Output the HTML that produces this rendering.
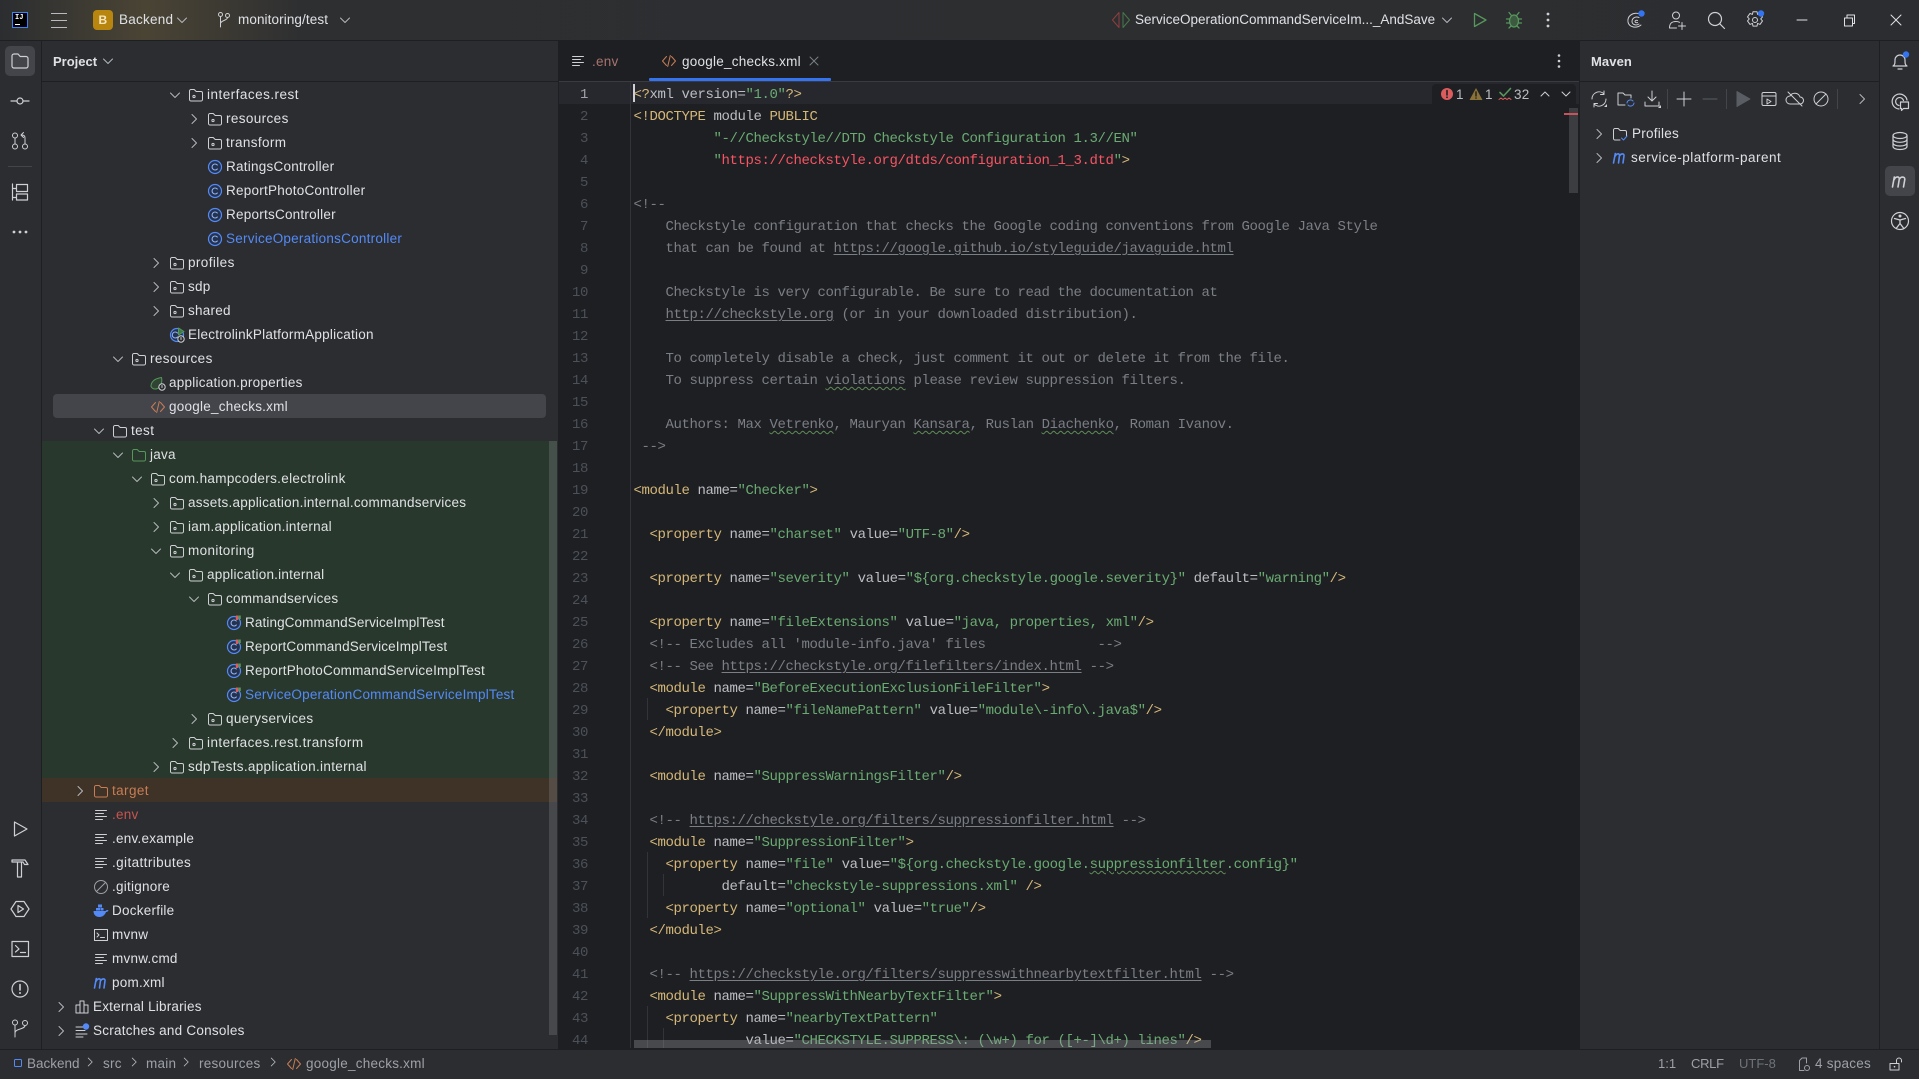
<!DOCTYPE html>
<html lang="en"><head><meta charset="utf-8"><title>IDE</title>
<style>
*{box-sizing:border-box}
html,body{margin:0;padding:0;width:1919px;height:1079px;overflow:hidden;background:#2b2d30}
body{font:13.5px/24px "Liberation Sans",sans-serif;letter-spacing:.24px;color:#dfe1e5;position:relative}
.a{position:absolute}
.r{position:absolute;left:0;width:557px;height:24px;line-height:24px;white-space:nowrap;margin-top:1px}
.r svg{position:absolute;width:16px;height:16px;top:4px}
.r span{position:absolute;top:0}
svg{overflow:visible;fill:none;stroke:#ced0d6;stroke-width:1;stroke-linecap:round;stroke-linejoin:round}
.s{position:absolute;width:20px;height:20px}
.t{position:absolute;white-space:nowrap}
pre{margin:0;position:absolute;font:14px/22px "Liberation Mono",monospace;letter-spacing:-.401px;color:#bcbec4}
.g{color:#d5b778}.v{color:#6aab73}.c{color:#7a7e85}.e{color:#f75464}
.u{text-decoration:underline;text-underline-offset:2px}
.w{text-decoration:underline wavy #5f8c58 1px;text-underline-offset:2px}
</style></head><body>
<svg width="0" height="0" style="position:absolute">
<defs>
<symbol id="cr" viewBox="0 0 16 16"><path d="M6 3.5l4.5 4.5L6 12.5" stroke="#b4b8bf"/></symbol>
<symbol id="cd" viewBox="0 0 16 16"><path d="M3.5 6l4.5 4.5L12.500 6" stroke="#b4b8bf"/></symbol>
<symbol id="f" viewBox="0 0 16 16"><path d="M1.500 4A1.500 1.500 0 0 1 3 2.500h3.200l2 2H13A1.500 1.500 0 0 1 14.500 6v6.500A1.500 1.500 0 0 1 13 14H3a1.500 1.500 0 0 1-1.500-1.500z"/></symbol>
<symbol id="p" viewBox="0 0 16 16"><path d="M1.500 4A1.500 1.500 0 0 1 3 2.500h3.200l2 2H13A1.500 1.500 0 0 1 14.500 6v6.500A1.500 1.500 0 0 1 13 14H3a1.500 1.500 0 0 1-1.500-1.500z"/><circle cx="6" cy="9.500" r="1.100"/></symbol>
<symbol id="fg" viewBox="0 0 16 16"><path d="M1.500 4A1.500 1.500 0 0 1 3 2.500h3.200l2 2H13A1.500 1.500 0 0 1 14.500 6v6.500A1.500 1.500 0 0 1 13 14H3a1.500 1.500 0 0 1-1.500-1.500z" stroke="#57965c"/></symbol>
<symbol id="fo" viewBox="0 0 16 16"><path d="M1.500 4A1.500 1.500 0 0 1 3 2.500h3.200l2 2H13A1.500 1.500 0 0 1 14.500 6v6.500A1.500 1.500 0 0 1 13 14H3a1.500 1.500 0 0 1-1.500-1.500z" stroke="#c77d55"/></symbol>
<symbol id="k" viewBox="0 0 16 16"><circle cx="8" cy="8" r="6.500" stroke="#548af7" stroke-width="1.200" fill="#25324d"/><path d="M10.300 6a3 3 0 1 0 0 4" stroke="#8fb3f7" stroke-width="1.100"/></symbol>
<symbol id="kt" viewBox="0 0 16 16"><circle cx="8" cy="8" r="6.500" stroke="#548af7" stroke-width="1.200" fill="#25324d"/><path d="M10.300 6a3 3 0 1 0 0 4" stroke="#8fb3f7" stroke-width="1.100"/><path d="M9.800 .5h2.400v4.500H9.800z" fill="#db5c5c" stroke="none"/><path d="M12.200 .5h2.600v3.500h-2.600z" fill="#57965c" stroke="none"/></symbol>
<symbol id="kr" viewBox="0 0 16 16"><circle cx="8" cy="8" r="6.500" stroke="#548af7" stroke-width="1.200" fill="#25324d"/><path d="M8.500 6a3 3 0 1 0 0 4" stroke="#8fb3f7" stroke-width="1.100"/><path d="M9.500 1l5.500 3.500L9.500 8z" fill="#3d7a48" stroke="#57965c"/><circle cx="12" cy="12" r="3.200" fill="#2b2d30" stroke="#ced0d6"/><path d="M12 10.500v2" stroke="#ced0d6"/></symbol>
<symbol id="x" viewBox="0 0 16 16"><path d="M5.500 3.500L1.500 8l4 4.500M10.500 3.500l4 4.500-4 4.500" stroke="#c77d55"/><path d="M9.300 2.500L6.700 13.500" stroke="#c77d55"/></symbol>
<symbol id="l" viewBox="0 0 16 16"><path d="M2.500 3.500h11M2.500 6.500h8M2.500 9.500h11M2.500 12.500h7" stroke="#ced0d6"/></symbol>
<symbol id="m" viewBox="0 0 16 16"><path d="M1.500 13l1.800-9.500M3.300 6c1-2.500 4.200-3 4.200-.5L6.500 13M7.500 6c1-2.500 4.700-3 4.500-.3L11 13" stroke="#548af7" stroke-width="1.600"/></symbol>
</defs></svg>

<!-- title bar -->
<div class="a" style="left:0;top:0;width:1919px;height:40px;background:linear-gradient(90deg,#2b2d30 0,#4a4434 145px,#2e2f31 300px,#2b2d30 100%)"></div>
<div class="a" style="left:0;top:40px;width:1919px;height:1px;background:#1e1f22"></div>
<div class="a" style="left:12px;top:12px;width:16px;height:16px;background:#000;border:1.500px solid #3b82f6"></div>
<div class="t" style="left:15px;top:10.500px;font:bold 7px/14px 'Liberation Mono',monospace;letter-spacing:0;color:#fff">IJ</div>
<div class="a" style="left:15px;top:24px;width:5px;height:1px;background:#fff"></div>
<div class="a" style="left:51px;top:12.500px;width:16px;height:1.500px;background:#b8babf"></div>
<div class="a" style="left:51px;top:19.500px;width:16px;height:1.500px;background:#b8babf"></div>
<div class="a" style="left:51px;top:26.500px;width:16px;height:1.500px;background:#b8babf"></div>
<div class="a" style="left:93px;top:10px;width:20px;height:20px;border-radius:4px;background:#b8860f;color:#f5e6c0;font:bold 12px/20px 'Liberation Sans',sans-serif;text-align:center">B</div>
<div class="t" style="left:119px;top:8px;font-size:13.500px">Backend</div>
<svg class="a" style="left:174px;top:12px;width:16px;height:16px" viewBox="0 0 16 16"><use href="#cd"/></svg>
<svg class="s" style="left:214px;top:10px" viewBox="0 0 20 20"><circle cx="6.500" cy="4.500" r="2"/><circle cx="13.500" cy="5.500" r="2"/><path d="M6.500 6.500V17M13.500 7.500c0 3-7 3-7 6"/></svg>
<div class="t" style="left:238px;top:8px;letter-spacing:.1px">monitoring/test</div>
<svg class="a" style="left:337px;top:12px;width:16px;height:16px" viewBox="0 0 16 16"><use href="#cd"/></svg>

<svg class="s" style="left:1111px;top:10px" viewBox="0 0 20 20"><path d="M8 2.500L1.500 10 8 17.500z" stroke="#8c3f3f"/><path d="M12 2.500L18.500 10 12 17.500z" stroke="#47764c"/></svg>
<div class="t" style="left:1135px;top:8px;letter-spacing:0">ServiceOperationCommandServiceIm..._AndSave</div>
<svg class="a" style="left:1439px;top:12px;width:16px;height:16px" viewBox="0 0 16 16"><use href="#cd"/></svg>
<svg class="s" style="left:1470px;top:10px" viewBox="0 0 20 20"><path d="M4.500 3.500L16 10 4.500 16.500z" stroke="#57965c" stroke-width="1.300"/></svg>
<svg class="s" style="left:1504px;top:10px" viewBox="0 0 20 20"><g stroke="#57965c" stroke-width="1.300"><ellipse cx="10" cy="11" rx="4.500" ry="6" fill="#3c5a40"/><path d="M7 5l-2-2.500M13 5l2-2.500M5.500 9H2.500M14.500 9h3M5.500 13H2.500M14.500 13h3M7 16l-2 2M13 16l2 2"/></g></svg>
<svg class="s" style="left:1538px;top:10px" viewBox="0 0 20 20"><g fill="#ced0d6" stroke="none"><circle cx="10" cy="4" r="1.400"/><circle cx="10" cy="10" r="1.400"/><circle cx="10" cy="16" r="1.400"/></g></svg>
<svg class="s" style="left:1625px;top:10px" viewBox="0 0 20 20"><path d="M15 4C8 1.500 2 6 3 12c1 5 8 7 13 3M14 7.500c-4-1.500-7 1-7 4 0 3 4 4.500 7 2.500M12.500 10.500c-1.500-.5-2.500 0-2.500 1 0 1 1.500 1.500 2.500 1"/><circle cx="16.500" cy="3.500" r="3.200" fill="#3574f0" stroke="none"/></svg>
<svg class="s" style="left:1667px;top:10px" viewBox="0 0 20 20"><circle cx="9" cy="5.500" r="3.500"/><path d="M2.500 18c0-5 2.500-6.500 6.500-6.500 1.500 0 2.500.2 3.500.8M2.500 18h7M15 12.500v7M11.500 16h7"/></svg>
<svg class="s" style="left:1706px;top:10px" viewBox="0 0 20 20"><circle cx="9" cy="9" r="6.500" stroke-width="1.200"/><path d="M13.700 13.700l4.800 4.800" stroke-width="1.200"/></svg>
<svg class="s" style="left:1745px;top:10px" viewBox="0 0 20 20"><circle cx="10" cy="10" r="2.500"/><path d="M8 1.800h4l.6 2.600 2.400-1 2.500 3.500-1.800 2 1.800 2-2.500 3.500-2.400-1-.6 2.700H8l-.6-2.700-2.400 1-2.500-3.500 1.800-2-1.800-2L5 3.400l2.400 1z"/><circle cx="16" cy="3.500" r="3.200" fill="#3574f0" stroke="none"/></svg>
<svg class="s" style="left:1792px;top:10px" viewBox="0 0 20 20"><path d="M5 10h10" stroke="#dfe1e5"/></svg>
<svg class="s" style="left:1839px;top:10px" viewBox="0 0 20 20"><path d="M5.500 8h8v8h-8zM8 8V5h7.500v8.500h-2" stroke="#dfe1e5"/></svg>
<svg class="s" style="left:1886px;top:10px" viewBox="0 0 20 20"><path d="M5 5l10 10M15 5L5 15" stroke="#dfe1e5"/></svg>

<!-- left stripe -->
<div class="a" style="left:41px;top:41px;width:1px;height:1008px;background:#1e1f22"></div>
<div class="a" style="left:5px;top:46px;width:30px;height:30px;border-radius:5px;background:#43454a"></div>
<svg class="s" style="left:10px;top:51px" viewBox="0 0 20 20"><path d="M2 5A2 2 0 0 1 4 3h4l2.200 2.500H16a2 2 0 0 1 2 2V15a2 2 0 0 1-2 2H4a2 2 0 0 1-2-2z" stroke-width="1.200"/></svg>
<svg class="s" style="left:10px;top:91px" viewBox="0 0 20 20"><circle cx="10" cy="10" r="3" stroke-width="1.200"/><path d="M1 10h6M13 10h6" stroke-width="1.200"/></svg>
<svg class="s" style="left:10px;top:131px" viewBox="0 0 20 20"><circle cx="5" cy="4.500" r="2.500"/><circle cx="5" cy="15.500" r="2.500"/><circle cx="15" cy="15.500" r="2.500"/><path d="M5 7v6M15 13V7c0-2-1-3-3-3M13.500 1.500L11 4l2.500 2.500"/></svg>
<div class="a" style="left:8px;top:166px;width:24px;height:1px;background:#43454a"></div>
<svg class="s" style="left:10px;top:182px" viewBox="0 0 20 20"><path d="M2.500 2v16M2.500 6.500H6M2.500 15.500H6M6.500 2.500h11v7h-11zM6.500 12h11v6h-11z" stroke-width="1.200"/></svg>
<svg class="s" style="left:10px;top:222px" viewBox="0 0 20 20"><g fill="#ced0d6" stroke="none"><circle cx="4" cy="10" r="1.400"/><circle cx="10" cy="10" r="1.400"/><circle cx="16" cy="10" r="1.400"/></g></svg>
<svg class="s" style="left:10px;top:819px" viewBox="0 0 20 20"><path d="M4.500 3L17 10 4.500 17z" stroke-width="1.200"/></svg>
<svg class="s" style="left:10px;top:858px" viewBox="0 0 20 20"><path d="M2 2h13l3 4.500h-3.500L13 4H2zM7.500 4.500V19h4V4.500" stroke-width="1.200"/></svg>
<svg class="s" style="left:10px;top:899px" viewBox="0 0 20 20"><path d="M6 2.500h8l5 7.500-5 7.500H6L1 10z" stroke-width="1.200"/><path d="M8 6.500l5.500 3.500L8 13.500z" stroke-width="1.200"/></svg>
<svg class="s" style="left:10px;top:939px" viewBox="0 0 20 20"><path d="M2 2.500h16.500v15H2zM5.500 6.500l3.500 3.500-3.500 3M10.500 13.500h5" stroke-width="1.200"/></svg>
<svg class="s" style="left:10px;top:979px" viewBox="0 0 20 20"><circle cx="10" cy="10" r="8" stroke-width="1.200"/><path d="M10 5.500v5.500" stroke-width="1.600"/><circle cx="10" cy="14" r="1" fill="#ced0d6" stroke="none"/></svg>
<svg class="s" style="left:10px;top:1018px" viewBox="0 0 20 20"><circle cx="5" cy="4.500" r="2.500"/><circle cx="15" cy="5" r="2.500"/><path d="M5 7v12M15 7.500c0 4-10 3-10 7.500"/></svg>

<!-- project header -->
<div class="t" style="left:53px;top:50px;font-weight:bold;letter-spacing:0;font-size:13px">Project</div>
<svg class="a" style="left:100px;top:53px;width:16px;height:16px" viewBox="0 0 16 16"><use href="#cd"/></svg>
<div class="a" style="left:42px;top:81px;width:517px;height:1px;background:#1e1f22"></div>

<!-- row backgrounds -->
<div class="a" style="left:42px;top:441px;width:515px;height:337px;background:#29382c"></div>
<div class="a" style="left:42px;top:778px;width:515px;height:24px;background:#3f3226"></div>
<div class="a" style="left:53px;top:394px;width:493px;height:24px;border-radius:4px;background:#43454a"></div>

<!-- tree -->
<div class="r" style="top:82px"><svg style="left:167px"><use href="#cd"/></svg><svg style="left:188px"><use href="#p"/></svg><span style="left:207px;letter-spacing:.48px">interfaces.rest</span></div>
<div class="r" style="top:106px"><svg style="left:186px"><use href="#cr"/></svg><svg style="left:207px"><use href="#p"/></svg><span style="left:226px;letter-spacing:.38px">resources</span></div>
<div class="r" style="top:130px"><svg style="left:186px"><use href="#cr"/></svg><svg style="left:207px"><use href="#p"/></svg><span style="left:226px;letter-spacing:.38px">transform</span></div>
<div class="r" style="top:154px"><svg style="left:207px"><use href="#k"/></svg><span style="left:226px">RatingsController</span></div>
<div class="r" style="top:178px"><svg style="left:207px"><use href="#k"/></svg><span style="left:226px">ReportPhotoController</span></div>
<div class="r" style="top:202px"><svg style="left:207px"><use href="#k"/></svg><span style="left:226px">ReportsController</span></div>
<div class="r" style="top:226px"><svg style="left:207px"><use href="#k"/></svg><span style="left:226px;color:#548af7">ServiceOperationsController</span></div>
<div class="r" style="top:250px"><svg style="left:148px"><use href="#cr"/></svg><svg style="left:169px"><use href="#p"/></svg><span style="left:188px;letter-spacing:.4px">profiles</span></div>
<div class="r" style="top:274px"><svg style="left:148px"><use href="#cr"/></svg><svg style="left:169px"><use href="#p"/></svg><span style="left:188px">sdp</span></div>
<div class="r" style="top:298px"><svg style="left:148px"><use href="#cr"/></svg><svg style="left:169px"><use href="#p"/></svg><span style="left:188px">shared</span></div>
<div class="r" style="top:322px"><svg style="left:169px"><use href="#kr"/></svg><span style="left:188px">ElectrolinkPlatformApplication</span></div>
<div class="r" style="top:346px"><svg style="left:110px"><use href="#cd"/></svg><svg style="left:131px"><use href="#p"/></svg><span style="left:150px;letter-spacing:.38px">resources</span></div>
<div class="r" style="top:370px"><svg style="left:150px" viewBox="0 0 16 16"><path d="M1 11.500C1 6.500 5 3.500 11.500 2.500c1 4-.5 9-4 11-2.500 1-5 .5-6.500-2z" stroke="#57965c" fill="#2f4433"/><circle cx="12" cy="12" r="3.200" fill="#2b2d30" stroke="#ced0d6"/><path d="M12 10.500v2" stroke="#ced0d6"/></svg><span style="left:169px">application.properties</span></div>
<div class="r" style="top:394px"><svg style="left:150px"><use href="#x"/></svg><span style="left:169px">google_checks.xml</span></div>
<div class="r" style="top:418px"><svg style="left:91px"><use href="#cd"/></svg><svg style="left:112px"><use href="#f"/></svg><span style="left:131px;letter-spacing:.4px">test</span></div>
<div class="r" style="top:442px"><svg style="left:110px"><use href="#cd"/></svg><svg style="left:131px"><use href="#fg"/></svg><span style="left:150px">java</span></div>
<div class="r" style="top:466px"><svg style="left:129px"><use href="#cd"/></svg><svg style="left:150px"><use href="#p"/></svg><span style="left:169px;letter-spacing:.33px">com.hampcoders.electrolink</span></div>
<div class="r" style="top:490px"><svg style="left:148px"><use href="#cr"/></svg><svg style="left:169px"><use href="#p"/></svg><span style="left:188px">assets.application.internal.commandservices</span></div>
<div class="r" style="top:514px"><svg style="left:148px"><use href="#cr"/></svg><svg style="left:169px"><use href="#p"/></svg><span style="left:188px">iam.application.internal</span></div>
<div class="r" style="top:538px"><svg style="left:148px"><use href="#cd"/></svg><svg style="left:169px"><use href="#p"/></svg><span style="left:188px;letter-spacing:.36px">monitoring</span></div>
<div class="r" style="top:562px"><svg style="left:167px"><use href="#cd"/></svg><svg style="left:188px"><use href="#p"/></svg><span style="left:207px">application.internal</span></div>
<div class="r" style="top:586px"><svg style="left:186px"><use href="#cd"/></svg><svg style="left:207px"><use href="#p"/></svg><span style="left:226px">commandservices</span></div>
<div class="r" style="top:610px"><svg style="left:226px"><use href="#kt"/></svg><span style="left:245px;letter-spacing:.11px">RatingCommandServiceImplTest</span></div>
<div class="r" style="top:634px"><svg style="left:226px"><use href="#kt"/></svg><span style="left:245px;letter-spacing:.15px">ReportCommandServiceImplTest</span></div>
<div class="r" style="top:658px"><svg style="left:226px"><use href="#kt"/></svg><span style="left:245px;letter-spacing:.2px">ReportPhotoCommandServiceImplTest</span></div>
<div class="r" style="top:682px"><svg style="left:226px"><use href="#kt"/></svg><span style="left:245px;color:#548af7;letter-spacing:.2px">ServiceOperationCommandServiceImplTest</span></div>
<div class="r" style="top:706px"><svg style="left:186px"><use href="#cr"/></svg><svg style="left:207px"><use href="#p"/></svg><span style="left:226px;letter-spacing:.32px">queryservices</span></div>
<div class="r" style="top:730px"><svg style="left:167px"><use href="#cr"/></svg><svg style="left:188px"><use href="#p"/></svg><span style="left:207px;letter-spacing:.44px">interfaces.rest.transform</span></div>
<div class="r" style="top:754px"><svg style="left:148px"><use href="#cr"/></svg><svg style="left:169px"><use href="#p"/></svg><span style="left:188px;letter-spacing:.32px">sdpTests.application.internal</span></div>
<div class="r" style="top:778px"><svg style="left:72px"><use href="#cr"/></svg><svg style="left:93px"><use href="#fo"/></svg><span style="left:112px;color:#c77d55;letter-spacing:.4px">target</span></div>
<div class="r" style="top:802px"><svg style="left:93px"><use href="#l"/></svg><span style="left:112px;color:#c75450">.env</span></div>
<div class="r" style="top:826px"><svg style="left:93px"><use href="#l"/></svg><span style="left:112px">.env.example</span></div>
<div class="r" style="top:850px"><svg style="left:93px"><use href="#l"/></svg><span style="left:112px;letter-spacing:.4px">.gitattributes</span></div>
<div class="r" style="top:874px"><svg style="left:93px" viewBox="0 0 16 16"><circle cx="8" cy="8" r="6.500" stroke="#9da0a8"/><path d="M3.500 12.500l9-9" stroke="#9da0a8"/></svg><span style="left:112px">.gitignore</span></div>
<div class="r" style="top:898px"><svg style="left:93px" viewBox="0 0 16 16"><g fill="#548af7" stroke="none"><path d="M.5 8h12c.7-1 2-1.300 3-.8-.5 1.300-1.500 1.800-2.500 1.800-1 3-3.500 5-6.500 5-3.500 0-6-2-6-6z"/><rect x="5" y="1.500" width="4" height="3"/><rect x="3" y="5" width="4" height="2.500"/><rect x="7.500" y="5" width="3" height="2.500"/></g></svg><span style="left:112px">Dockerfile</span></div>
<div class="r" style="top:922px"><svg style="left:93px" viewBox="0 0 16 16"><path d="M1.500 2.500h13v11h-13zM4 6l2 2-2 2M7.500 10.500h4"/></svg><span style="left:112px">mvnw</span></div>
<div class="r" style="top:946px"><svg style="left:93px"><use href="#l"/></svg><span style="left:112px">mvnw.cmd</span></div>
<div class="r" style="top:970px"><svg style="left:93px"><use href="#m"/></svg><span style="left:112px">pom.xml</span></div>
<div class="r" style="top:994px"><svg style="left:53px"><use href="#cr"/></svg><svg style="left:74px" viewBox="0 0 16 16"><path d="M2 6h4v8H2zM6 2h4v12H6zM10 6h4v8h-4z"/></svg><span style="left:93px;letter-spacing:.2px">External Libraries</span></div>
<div class="r" style="top:1018px"><svg style="left:53px"><use href="#cr"/></svg><svg style="left:74px" viewBox="0 0 16 16"><path d="M2 4h8M2 7.500h9M2 11h11M2 14h7"/><circle cx="12" cy="3.500" r="3.200" fill="#548af7" stroke="none"/></svg><span style="left:93px">Scratches and Consoles</span></div>

<!-- tree scrollbar -->
<div class="a" style="left:549px;top:441px;width:8px;height:594px;background:rgba(140,145,150,.28)"></div>
<div class="a" style="left:558px;top:41px;width:1px;height:1008px;background:#1e1f22"></div>

<!-- editor -->
<div class="a" style="left:559px;top:41px;width:1020px;height:1008px;background:#1e1f22"></div>
<div class="a" style="left:559px;top:81px;width:1020px;height:1px;background:#393b40"></div>
<div class="a" style="left:649px;top:78px;width:182px;height:3px;background:#3574f0;border-radius:1px"></div>
<svg class="a" style="left:570px;top:53px;width:16px;height:16px" viewBox="0 0 16 16"><use href="#l"/></svg>
<div class="t" style="left:592px;top:50px;color:#a8736f">.env</div>
<svg class="a" style="left:661px;top:53px;width:16px;height:16px" viewBox="0 0 16 16"><use href="#x"/></svg>
<div class="t" style="left:682px;top:50px">google_checks.xml</div>
<svg class="a" style="left:808px;top:55px;width:12px;height:12px" viewBox="0 0 12 12"><path d="M2 2l8 8M10 2l-8 8" stroke="#7a7e85"/></svg>
<svg class="s" style="left:1549px;top:51px" viewBox="0 0 20 20"><g fill="#ced0d6" stroke="none"><circle cx="10" cy="4.500" r="1.300"/><circle cx="10" cy="10" r="1.300"/><circle cx="10" cy="15.500" r="1.300"/></g></svg>

<div class="a" style="left:559px;top:82px;width:1020px;height:22px;background:#26282e"></div>
<div class="a" style="left:630px;top:82px;width:1px;height:966px;background:#313438"></div>

<!-- indent guides -->
<div class="a" style="left:647px;top:698px;width:1px;height:22px;background:#313438"></div>
<div class="a" style="left:647px;top:852px;width:1px;height:66px;background:#313438"></div>
<div class="a" style="left:663px;top:874px;width:1px;height:22px;background:#313438"></div>
<div class="a" style="left:647px;top:1006px;width:1px;height:42px;background:#313438"></div>
<div class="a" style="left:663px;top:1028px;width:1px;height:20px;background:#313438"></div>

<pre style="left:548px;top:84px;width:40px;text-align:right;color:#4b5059"><span style="color:#a1a3ab">1</span>
2
3
4
5
6
7
8
9
10
11
12
13
14
15
16
17
18
19
20
21
22
23
24
25
26
27
28
29
30
31
32
33
34
35
36
37
38
39
40
41
42
43
44</pre>

<pre style="left:633.500px;top:84px;height:964px;overflow:hidden"><span class="g">&lt;?</span>xml version=<span class="v">"1.0"</span><span class="g">?&gt;</span>
<span class="g">&lt;!DOCTYPE</span> module <span class="g">PUBLIC</span>
          <span class="v">"-//Checkstyle//DTD Checkstyle Configuration 1.3//EN"</span>
          <span class="v">"</span><span class="e">https://checkstyle.org/dtds/configuration_1_3.dtd</span><span class="v">"</span><span class="g">&gt;</span>

<span class="c">&lt;!--
    Checkstyle configuration that checks the Google coding conventions from Google Java Style
    that can be found at <span class="u">https://google.github.io/styleguide/javaguide.html</span>

    Checkstyle is very configurable. Be sure to read the documentation at
    <span class="u">http://checkstyle.org</span> (or in your downloaded distribution).

    To completely disable a check, just comment it out or delete it from the file.
    To suppress certain <span class="w">violations</span> please review suppression filters.

    Authors: Max <span class="w">Vetrenko</span>, Mauryan <span class="w">Kansara</span>, Ruslan <span class="w">Diachenko</span>, Roman Ivanov.
 --&gt;</span>

<span class="g">&lt;module</span> name=<span class="v">"Checker"</span><span class="g">&gt;</span>

  <span class="g">&lt;property</span> name=<span class="v">"charset"</span> value=<span class="v">"UTF-8"</span><span class="g">/&gt;</span>

  <span class="g">&lt;property</span> name=<span class="v">"severity"</span> value=<span class="v">"${org.checkstyle.google.severity}"</span> default=<span class="v">"warning"</span><span class="g">/&gt;</span>

  <span class="g">&lt;property</span> name=<span class="v">"fileExtensions"</span> value=<span class="v">"java, properties, xml"</span><span class="g">/&gt;</span>
  <span class="c">&lt;!-- Excludes all 'module-info.java' files              --&gt;</span>
  <span class="c">&lt;!-- See <span class="u">https://checkstyle.org/filefilters/index.html</span> --&gt;</span>
  <span class="g">&lt;module</span> name=<span class="v">"BeforeExecutionExclusionFileFilter"</span><span class="g">&gt;</span>
    <span class="g">&lt;property</span> name=<span class="v">"fileNamePattern"</span> value=<span class="v">"module\-info\.java$"</span><span class="g">/&gt;</span>
  <span class="g">&lt;/module&gt;</span>

  <span class="g">&lt;module</span> name=<span class="v">"SuppressWarningsFilter"</span><span class="g">/&gt;</span>

  <span class="c">&lt;!-- <span class="u">https://checkstyle.org/filters/suppressionfilter.html</span> --&gt;</span>
  <span class="g">&lt;module</span> name=<span class="v">"SuppressionFilter"</span><span class="g">&gt;</span>
    <span class="g">&lt;property</span> name=<span class="v">"file"</span> value=<span class="v">"${org.checkstyle.google.<span class="w">suppressionfilter</span>.config}"</span>
           default=<span class="v">"checkstyle-suppressions.xml"</span> <span class="g">/&gt;</span>
    <span class="g">&lt;property</span> name=<span class="v">"optional"</span> value=<span class="v">"true"</span><span class="g">/&gt;</span>
  <span class="g">&lt;/module&gt;</span>

  <span class="c">&lt;!-- <span class="u">https://checkstyle.org/filters/suppresswithnearbytextfilter.html</span> --&gt;</span>
  <span class="g">&lt;module</span> name=<span class="v">"SuppressWithNearbyTextFilter"</span><span class="g">&gt;</span>
    <span class="g">&lt;property</span> name=<span class="v">"nearbyTextPattern"</span>
              value=<span class="v">"CHECKSTYLE.SUPPRESS\: (\w+) for ([+-]\d+) lines"</span><span class="g">/&gt;</span></pre>
<div class="a" style="left:633px;top:84px;width:2px;height:18px;background:#ced0d6"></div>

<!-- editor scrollbars -->
<div class="a" style="left:634px;top:1040px;width:577px;height:8px;background:rgba(160,162,168,.32)"></div>
<div class="a" style="left:1569px;top:108px;width:9px;height:85px;background:#3b3d40"></div>
<div class="a" style="left:1564px;top:113px;width:14px;height:2px;background:#c9535d"></div>

<!-- inspection widget -->
<div class="a" style="left:1432px;top:84px;width:144px;height:20px;background:#1e1f22;border-radius:4px 4px 0 0"></div>
<svg class="a" style="left:1440px;top:87px;width:14px;height:14px" viewBox="0 0 14 14"><circle cx="7" cy="7" r="6" fill="#db5c5c" stroke="none"/><path d="M7 3.500v4.500" stroke="#1e1f22" stroke-width="1.600"/><circle cx="7" cy="10.300" r=".9" fill="#1e1f22" stroke="none"/></svg>
<div class="t" style="left:1456px;top:83px;color:#bcbec4">1</div>
<svg class="a" style="left:1469px;top:87px;width:14px;height:14px" viewBox="0 0 14 14"><path d="M7 1L13.500 13H.5z" fill="#8a7238" stroke="none"/><path d="M7 5v4" stroke="#1e1f22" stroke-width="1.400"/><circle cx="7" cy="11" r=".8" fill="#1e1f22" stroke="none"/></svg>
<div class="t" style="left:1485px;top:83px;color:#bcbec4">1</div>
<svg class="a" style="left:1498px;top:87px;width:14px;height:14px" viewBox="0 0 14 14"><path d="M2 5.500L5.500 9 12.500 1.500" stroke="#57965c" stroke-width="1.600"/><path d="M1 12.500l2-1.500 2 1.500 2-1.500 2 1.500 2-1.500 2 1.500" stroke="#db5c5c"/></svg>
<div class="t" style="left:1514px;top:83px;color:#bcbec4">32</div>
<svg class="a" style="left:1539px;top:88px;width:12px;height:12px" viewBox="0 0 12 12"><path d="M2 8l4-4 4 4"/></svg>
<svg class="a" style="left:1560px;top:88px;width:12px;height:12px" viewBox="0 0 12 12"><path d="M2 4l4 4 4-4"/></svg>

<!-- Maven -->
<div class="a" style="left:1579px;top:41px;width:1px;height:1008px;background:#1e1f22"></div>
<div class="a" style="left:1580px;top:41px;width:299px;height:1008px;background:#2b2d30"></div>
<div class="a" style="left:1580px;top:81px;width:299px;height:1px;background:#1e1f22"></div>
<div class="t" style="left:1591px;top:50px;font-weight:bold;letter-spacing:.1px;font-size:13px">Maven</div>
<svg class="s" style="left:1589px;top:89px" viewBox="0 0 20 20"><path d="M3 10a7 7 0 0 1 12-5M17 10a7 7 0 0 1-12 5M15 2v3.500h-3.500M5 18v-3.500h3.500"/><path d="M18 18l-3 0 3-3z" fill="#ced0d6" stroke="none"/></svg>
<svg class="s" style="left:1616px;top:89px" viewBox="0 0 20 20"><path d="M2 4h5l2 2h6v3M2 4v12h7"/><path d="M11 14a3.500 3.500 0 0 1 6-2M18 14a3.500 3.500 0 0 1-6 2" stroke="#548af7"/></svg>
<svg class="s" style="left:1642px;top:89px" viewBox="0 0 20 20"><path d="M10 2v10M6 8l4 4 4-4M3 13v4h14v-4"/><path d="M19 19h-3l3-3z" fill="#ced0d6" stroke="none"/></svg>
<div class="a" style="left:1667px;top:89px;width:1px;height:20px;background:#43454a"></div>
<svg class="s" style="left:1674px;top:89px" viewBox="0 0 20 20"><path d="M10 3v14M3 10h14"/></svg>
<svg class="s" style="left:1700px;top:89px" viewBox="0 0 20 20"><path d="M3 10h14" stroke="#5a5d63"/></svg>
<div class="a" style="left:1726px;top:89px;width:1px;height:20px;background:#43454a"></div>
<svg class="s" style="left:1733px;top:89px" viewBox="0 0 20 20"><path d="M4 2.500L17 10 4 17.500z" fill="#5a5d63" stroke="#5a5d63"/></svg>
<svg class="s" style="left:1759px;top:89px" viewBox="0 0 20 20"><rect x="3" y="3.500" width="14" height="13" rx="1.500"/><path d="M3 7h14M8 10l4 2.500L8 15z"/></svg>
<svg class="s" style="left:1785px;top:89px" viewBox="0 0 20 20"><path d="M5 15a4 4 0 0 1 0-8 5.500 5.500 0 0 1 10 1 3.500 3.500 0 0 1 0 7zM3 3l14 14"/></svg>
<svg class="s" style="left:1811px;top:89px" viewBox="0 0 20 20"><circle cx="10" cy="10" r="7"/><path d="M5 15L15 5"/></svg>
<div class="a" style="left:1837px;top:89px;width:1px;height:20px;background:#43454a"></div>
<svg class="a" style="left:1854px;top:91px;width:16px;height:16px" viewBox="0 0 16 16"><use href="#cr"/></svg>
<svg class="a" style="left:1591px;top:126px;width:16px;height:16px" viewBox="0 0 16 16"><use href="#cr"/></svg>
<svg class="a" style="left:1612px;top:126px;width:16px;height:16px" viewBox="0 0 16 16"><path d="M1.500 4A1.500 1.500 0 0 1 3 2.500h3.200l2 2H13A1.500 1.500 0 0 1 14.500 6v4M8 14H3a1.500 1.500 0 0 1-1.500-1.500V4"/><path d="M9.500 12l2 2 3.500-4" stroke="#548af7"/></svg>
<div class="t" style="left:1632px;top:122px">Profiles</div>
<svg class="a" style="left:1591px;top:150px;width:16px;height:16px" viewBox="0 0 16 16"><use href="#cr"/></svg>
<svg class="a" style="left:1612px;top:150px;width:16px;height:16px" viewBox="0 0 16 16"><use href="#m"/></svg>
<div class="t" style="left:1631px;top:146px;letter-spacing:.5px">service-platform-parent</div>

<!-- right stripe -->
<div class="a" style="left:1879px;top:41px;width:1px;height:1008px;background:#1e1f22"></div>
<svg class="s" style="left:1890px;top:51px" viewBox="0 0 20 20"><path d="M3 15c2-1 2-3 2-6a5 5 0 0 1 10 0c0 3 0 5 2 6zM8 18h4" stroke-width="1.200"/><circle cx="16" cy="3.500" r="3.200" fill="#3574f0" stroke="none"/></svg>
<svg class="s" style="left:1890px;top:92px" viewBox="0 0 20 20"><path d="M9 17a7.500 7.500 0 1 1 8-9M9 13.500a4 4 0 1 1 4.500-5" stroke-width="1.200"/><path d="M10.500 10h8v6.500h-5l-2 2v-2h-1z" stroke-width="1.200"/></svg>
<svg class="s" style="left:1890px;top:131px" viewBox="0 0 20 20"><ellipse cx="10" cy="4.500" rx="7" ry="3" stroke-width="1.200"/><path d="M3 4.500v11c0 1.700 3 3 7 3s7-1.300 7-3v-11M3 8.300c0 1.700 3 3 7 3s7-1.300 7-3M3 12c0 1.700 3 3 7 3s7-1.300 7-3" stroke-width="1.200"/></svg>
<div class="a" style="left:1885px;top:166px;width:30px;height:30px;border-radius:5px;background:#43454a"></div>
<svg class="s" style="left:1890px;top:171px" viewBox="0 0 20 20"><path d="M2.500 16l1.800-10M4.300 8.500c1-3 5-3.500 5-.5L8 16M9.300 8.500c1-3 5.700-3.500 5.500 0L13.500 16" stroke="#ced0d6" stroke-width="1.600"/></svg>
<svg class="s" style="left:1890px;top:211px" viewBox="0 0 20 20"><circle cx="10" cy="10" r="8.500" stroke-width="1.200"/><circle cx="10" cy="5" r="1.500" fill="#ced0d6" stroke="none"/><path d="M4.500 7.500l5.500 1.500 5.500-1.500M10 9v3.500L6.500 17M10 12.500l3.500 4.500" stroke-width="1.300"/></svg>

<!-- status bar -->
<div class="a" style="left:0;top:1049px;width:1919px;height:1px;background:#1e1f22"></div>
<div class="a" style="left:0;top:1050px;width:1919px;height:29px;background:#2b2d30"></div>
<div class="a" style="left:14px;top:1059px;width:8px;height:8px;border:1.500px solid #548af7;border-radius:1.500px"></div>
<div class="t" style="left:27px;top:1052px;color:#9da0a8;letter-spacing:0">Backend</div>
<svg class="a" style="left:83px;top:1055px;width:14px;height:14px" viewBox="0 0 16 16"><use href="#cr"/></svg>
<div class="t" style="left:103px;top:1052px;color:#9da0a8">src</div>
<svg class="a" style="left:127px;top:1055px;width:14px;height:14px" viewBox="0 0 16 16"><use href="#cr"/></svg>
<div class="t" style="left:146px;top:1052px;color:#9da0a8">main</div>
<svg class="a" style="left:179px;top:1055px;width:14px;height:14px" viewBox="0 0 16 16"><use href="#cr"/></svg>
<div class="t" style="left:199px;top:1052px;color:#9da0a8">resources</div>
<svg class="a" style="left:266px;top:1055px;width:14px;height:14px" viewBox="0 0 16 16"><use href="#cr"/></svg>
<svg class="a" style="left:286px;top:1056px;width:16px;height:16px" viewBox="0 0 16 16"><use href="#x"/></svg>
<div class="t" style="left:306px;top:1052px;color:#9da0a8">google_checks.xml</div>
<div class="t" style="left:1658px;top:1052px;color:#9da0a8;letter-spacing:0;font-size:13px">1:1</div>
<div class="t" style="left:1691px;top:1052px;color:#9da0a8;letter-spacing:-.3px;font-size:13px">CRLF</div>
<div class="t" style="left:1739px;top:1052px;color:#6f737a;letter-spacing:0;font-size:13px">UTF-8</div>
<svg class="a" style="left:1796px;top:1056px;width:16px;height:16px" viewBox="0 0 16 16"><path d="M8 14.500H3.500v-10L6 2h4.500v5" stroke="#9da0a8"/><circle cx="11" cy="12" r="2.500" stroke="#9da0a8"/></svg>
<div class="t" style="left:1815px;top:1052px;color:#9da0a8">4 spaces</div>
<svg class="a" style="left:1888px;top:1056px;width:16px;height:16px" viewBox="0 0 16 16"><path d="M2 7.500h9v6.500H2zM8.500 7.500V4.500a2.500 2.500 0 0 1 5 0V6" stroke="#ced0d6"/><circle cx="6.500" cy="10.700" r=".8" fill="#ced0d6" stroke="none"/></svg>
</body></html>
